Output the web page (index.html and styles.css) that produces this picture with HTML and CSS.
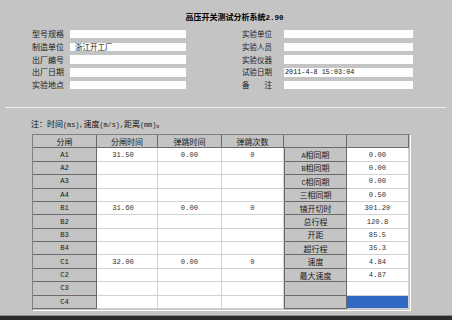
FILE: index.html
```html
<!DOCTYPE html>
<html lang="zh-CN">
<head>
    <meta charset="UTF-8">
    <title>高压开关测试分析系统</title>
    <link rel="stylesheet" href="styles.css">
</head>
<body>
    <div class="window">
        <h1 class="title">高压开关测试分析系统<span class="mono">2.90</span></h1>

        <div class="info">
            <div class="info-col left">
                <label>型号规格</label><div class="field"></div>
                <label>制造单位</label><div class="field cn">浙江开工厂</div>
                <label>出厂编号</label><div class="field"></div>
                <label>出厂日期</label><div class="field"></div>
                <label>实验地点</label><div class="field"></div>
            </div>
            <div class="info-col right">
                <label>实验单位</label><div class="field"></div>
                <label>实验人员</label><div class="field"></div>
                <label>实验仪器</label><div class="field"></div>
                <label>试验日期</label><div class="field date">2011-4-8 15:03:04</div>
                <label>备注</label><div class="field"></div>
            </div>
        </div>

        <div class="sep"></div>

        <p class="note">注：时间<span class="mono">(ms),</span>速度<span class="mono">(m/s),</span>距离<span class="mono">(mm)</span>。</p>

        <div class="grid-box">
            <div class="grid">
                <div class="c f">分闸</div><div class="c f">分闸时间</div><div class="c f">弹跳时间</div><div class="c f">弹跳次数</div><div class="c f"></div><div class="c f"></div>

                <div class="c f n">A1</div><div class="c n pl">31.50</div><div class="c n">0.00</div><div class="c n">0</div><div class="c f mid"><span><span class="mono">A</span>相同期</span></div><div class="c n">0.00</div>
                <div class="c f n">A2</div><div class="c"></div><div class="c"></div><div class="c"></div><div class="c f mid"><span><span class="mono">B</span>相同期</span></div><div class="c n">0.00</div>
                <div class="c f n">A3</div><div class="c"></div><div class="c"></div><div class="c"></div><div class="c f mid"><span><span class="mono">C</span>相同期</span></div><div class="c n">0.00</div>
                <div class="c f n">A4</div><div class="c"></div><div class="c"></div><div class="c"></div><div class="c f mid">三相同期</div><div class="c n">0.50</div>

                <div class="c f n">B1</div><div class="c n pl">31.60</div><div class="c n">0.00</div><div class="c n">0</div><div class="c f mid">铺开切时</div><div class="c n">301.20</div>
                <div class="c f n">B2</div><div class="c"></div><div class="c"></div><div class="c"></div><div class="c f mid">总行程</div><div class="c n">120.8</div>
                <div class="c f n">B3</div><div class="c"></div><div class="c"></div><div class="c"></div><div class="c f mid">开距</div><div class="c n">85.5</div>
                <div class="c f n">B4</div><div class="c"></div><div class="c"></div><div class="c"></div><div class="c f mid">超行程</div><div class="c n">35.3</div>

                <div class="c f n">C1</div><div class="c n pl">32.00</div><div class="c n">0.00</div><div class="c n">0</div><div class="c f mid">速度</div><div class="c n">4.84</div>
                <div class="c f n">C2</div><div class="c"></div><div class="c"></div><div class="c"></div><div class="c f mid">最大速度</div><div class="c n">4.87</div>
                <div class="c f n">C3</div><div class="c"></div><div class="c"></div><div class="c"></div><div class="c f mid"></div><div class="c"></div>
                <div class="c f n">C4</div><div class="c"></div><div class="c"></div><div class="c"></div><div class="c f mid"></div><div class="c sel"></div>
            </div>
        </div>

        <div class="taskbar"></div>
    </div>
</body>
</html>
```

FILE: styles.css
```css
body {
    margin: 0;
    background-color: #c4c4c4;
    font-family: "Noto Sans CJK SC", sans-serif;
    font-size: 8px;
    color: #111;
}

.window {
    height: 320px;
    display: flex;
    flex-direction: column;
    overflow: hidden;
}

.mono {
    font-family: "Liberation Mono", monospace;
    font-size: 6.8px;
}

.title {
    margin: 12px 0 0;
    padding-left: 17px;
    text-align: center;
    font-size: 8px;
    line-height: 10px;
    font-weight: bold;
    color: #000;
}

.title .mono {
    font-size: 7.5px;
}

/* top info block */
.info {
    display: flex;
    margin-top: 4.6px;
    padding-left: 32px;
}

.info-col {
    display: grid;
    grid-auto-rows: 12.8px;
    align-items: center;
}

.info-col.left {
    grid-template-columns: 32px 116px;
    column-gap: 6px;
}

.info-col.right {
    grid-template-columns: 30px 129px;
    column-gap: 12px;
    margin-left: 56px;
}

label {
    line-height: 10px;
    white-space: nowrap;
    text-align: justify;
    text-align-last: justify;
    color: #1a1a1a;
}

.info-col.right label {
    font-size: 7.5px;
}

.field {
    height: 8.5px;
    line-height: 8.5px;
    background-color: #fefefe;
    white-space: nowrap;
}

.field.cn {
    padding-left: 5px;
    font-size: 7.5px;
}

.field.date {
    padding-left: 1px;
    font-family: "Liberation Mono", monospace;
    font-size: 6.8px;
}

.sep {
    margin: 15.4px 6px 0 5px;
    border-top: 1px solid #ececec;
}

.note {
    margin: 11px 0 0 31px;
    line-height: 10px;
}

/* data grid */
.grid-box {
    margin: 4px 0 0 32px;
    width: max-content;
    border: 1px solid;
    border-color: #808080 #fff #fff #808080;
    padding: 0 1px 1px 0;
}

.grid {
    display: grid;
    grid-template-columns: 64px 61px 64px 62px 63px 62px;
    grid-template-rows: repeat(13, 13.4px);
    background-color: #fff;
}

.c {
    display: flex;
    align-items: center;
    justify-content: center;
    box-sizing: border-box;
    background-color: #fff;
    border-right: 1px solid #d2d2d2;
    border-bottom: 1px solid #d2d2d2;
    white-space: nowrap;
    color: #333;
}

.c.f {
    background-color: #c4c4c4;
    border-right-color: #6a6a6a;
    border-bottom-color: #6a6a6a;
    color: #1a1a1a;
}

.c.mid {
    border-left: 1px solid #6a6a6a;
}

.c.n {
    font-family: "Liberation Mono", monospace;
    font-size: 7.2px;
}

.c.pl {
    padding-right: 8px;
}

.c.sel {
    background-color: #316ac5;
}

.taskbar {
    margin-top: auto;
    height: 4px;
    background-color: #2c2c2c;
    border-top: 1px solid #8c8c8c;
}
```
